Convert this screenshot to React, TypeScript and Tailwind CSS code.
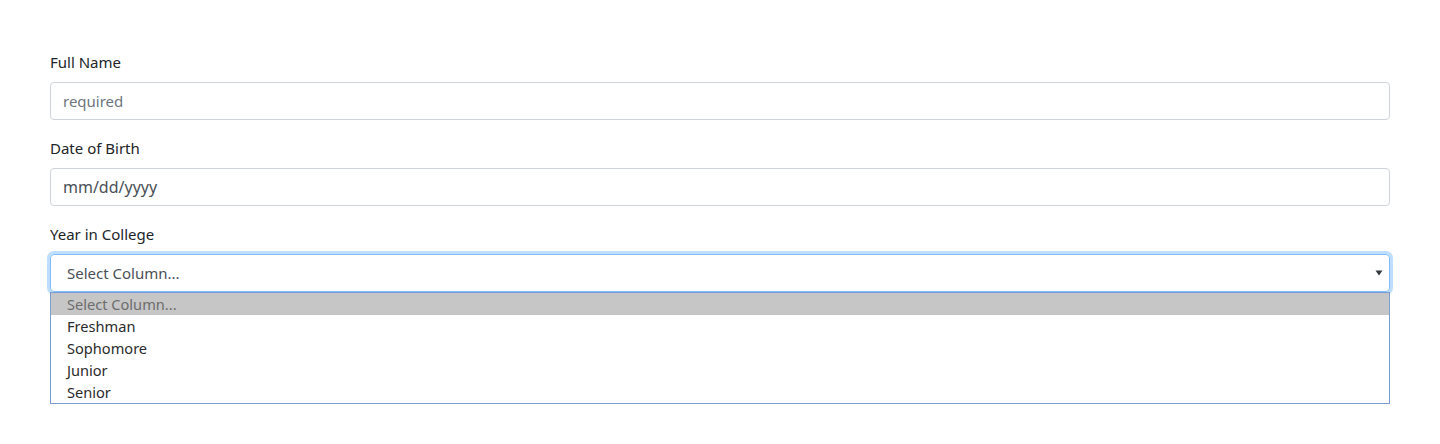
import React from "react";

export default function App() {
  const font = { fontFamily: '"Noto Sans", "Open Sans", sans-serif' };
  return (
    <div className="w-[1440px] h-[444px] bg-white px-[50px] pt-[50px] text-[#212529]" style={font}>
      <div className="mb-4">
        <label className="block text-[15px] leading-6 mb-2">Full Name</label>
        <input
          className="block w-full h-[38px] border border-[#ced4da] rounded-[4px] px-3 text-[15px] text-[#495057] placeholder:text-[#6c757d] outline-none"
          placeholder="required"
        />
      </div>
      <div className="mb-4">
        <label className="block text-[15px] leading-6 mb-2">Date of Birth</label>
        <div className="flex items-center w-full h-[38px] border border-[#ced4da] rounded-[4px] px-3 text-[16px] text-[#495057]">
          mm/dd/yyyy
        </div>
      </div>
      <div className="relative">
        <label className="block text-[15px] leading-6 mb-2">Year in College</label>
        <div className="flex items-center justify-between w-full h-[38px] border border-[#80bdff] rounded-[4px] pl-4 pr-[6px] text-[15px] text-[#495057] shadow-[0_0_0_3px_rgba(0,123,255,0.25)]">
          <span>Select Column...</span>
          <svg width="8" height="6" viewBox="0 0 8 6"><path d="M0.5 0.5h7L4 5.5z" fill="#343a40" /></svg>
        </div>
        <div className="absolute left-0 right-0 top-[70px] bg-white border border-[#7a9cd4] text-[14.6px] leading-[22px] text-[#2b2b2b]">
          <div className="bg-[#c6c6c6] text-[#6d6d6d] pl-4">Select Column...</div>
          <div className="pl-4">Freshman</div>
          <div className="pl-4">Sophomore</div>
          <div className="pl-4">Junior</div>
          <div className="pl-4">Senior</div>
        </div>
      </div>
    </div>
  );
}
